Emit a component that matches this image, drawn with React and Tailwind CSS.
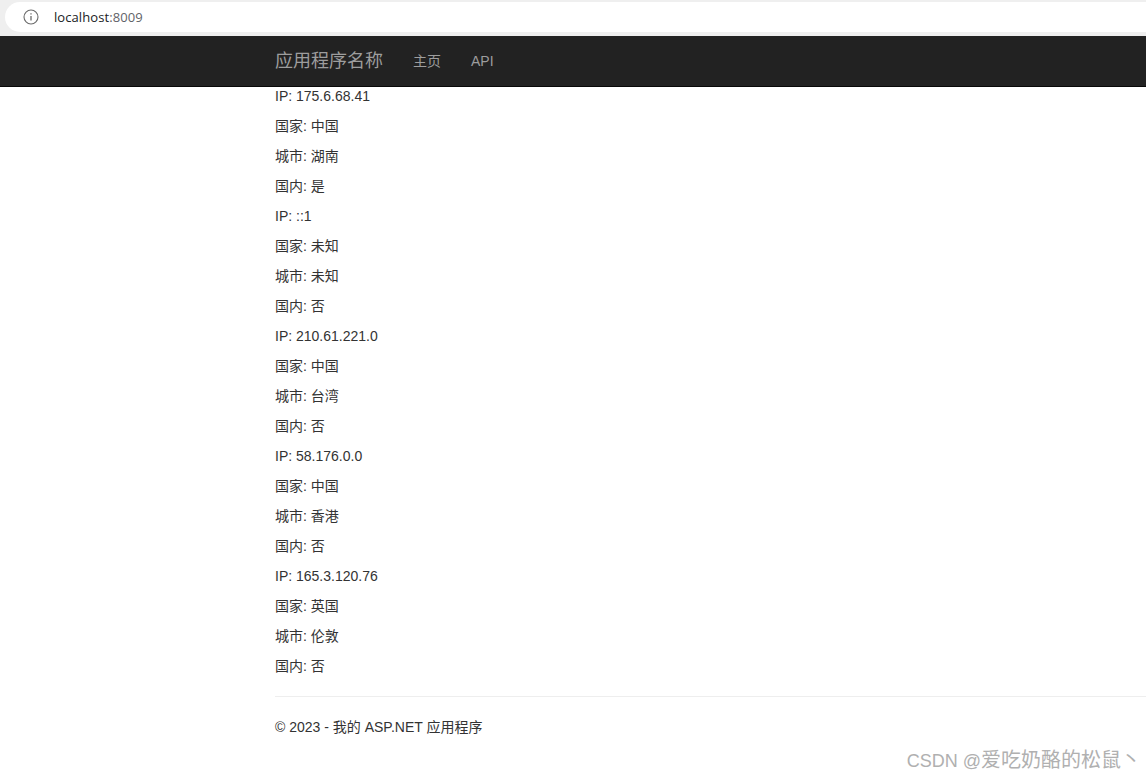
const rows = [
  ["IP", "175.6.68.41"], ["国家", "中国"], ["城市", "湖南"], ["国内", "是"],
  ["IP", "::1"], ["国家", "未知"], ["城市", "未知"], ["国内", "否"],
  ["IP", "210.61.221.0"], ["国家", "中国"], ["城市", "台湾"], ["国内", "否"],
  ["IP", "58.176.0.0"], ["国家", "中国"], ["城市", "香港"], ["国内", "否"],
  ["IP", "165.3.120.76"], ["国家", "英国"], ["城市", "伦敦"], ["国内", "否"],
];

const font = "font-['Liberation_Sans','Noto_Sans_CJK_SC',sans-serif]";

export default function App() {
  return (
    <div className={`${font} relative h-[780px] overflow-hidden bg-white text-[14px] leading-[20px] text-[#333]`}>
      <div className="h-[36px] bg-[#efefef] pt-[2px] pl-[5px]">
        <div className="flex h-[30px] items-center rounded-l-[15px] bg-white pl-[18px]">
          <svg width="16" height="16" viewBox="0 0 16 16" fill="none" stroke="#6b6b6b" strokeWidth="1.1">
            <circle cx="8" cy="8" r="7" />
            <path d="M8 7v4.5" strokeWidth="1.3" />
            <path d="M8 4.2v1.4" strokeWidth="1.3" />
          </svg>
          <span className="ml-[15px] font-['Open_Sans',sans-serif] text-[13px] tracking-[0.08px] text-[#202124]">
            localhost<span className="text-[#5f6368]">:8009</span>
          </span>
        </div>
      </div>
      <nav className="h-[51px] border-b border-[#080808] bg-[#222]">
        <div className="flex h-[50px] items-center pl-[275px] text-[#9d9d9d]">
          <span className="text-[18px]">应用程序名称</span>
          <span className="ml-[30px]">主页</span>
          <span className="ml-[30px]">API</span>
        </div>
      </nav>
      <main className="-mt-px pl-[275px]">
        {rows.map(([k, v], i) => (
          <p key={i} className="mb-[10px]">{k}: {v}</p>
        ))}
        <hr className="mt-[20px] border-t border-[#eee]" />
        <footer className="mt-[20px]">© 2023 - 我的 ASP.NET 应用程序</footer>
      </main>
      <div className="absolute right-[5px] bottom-[5px] text-[20px] leading-[28px] text-[#b0b0b0]"><span className="text-[18px]">CSDN @</span>爱吃奶酪的松鼠丶</div>
    </div>
  );
}
